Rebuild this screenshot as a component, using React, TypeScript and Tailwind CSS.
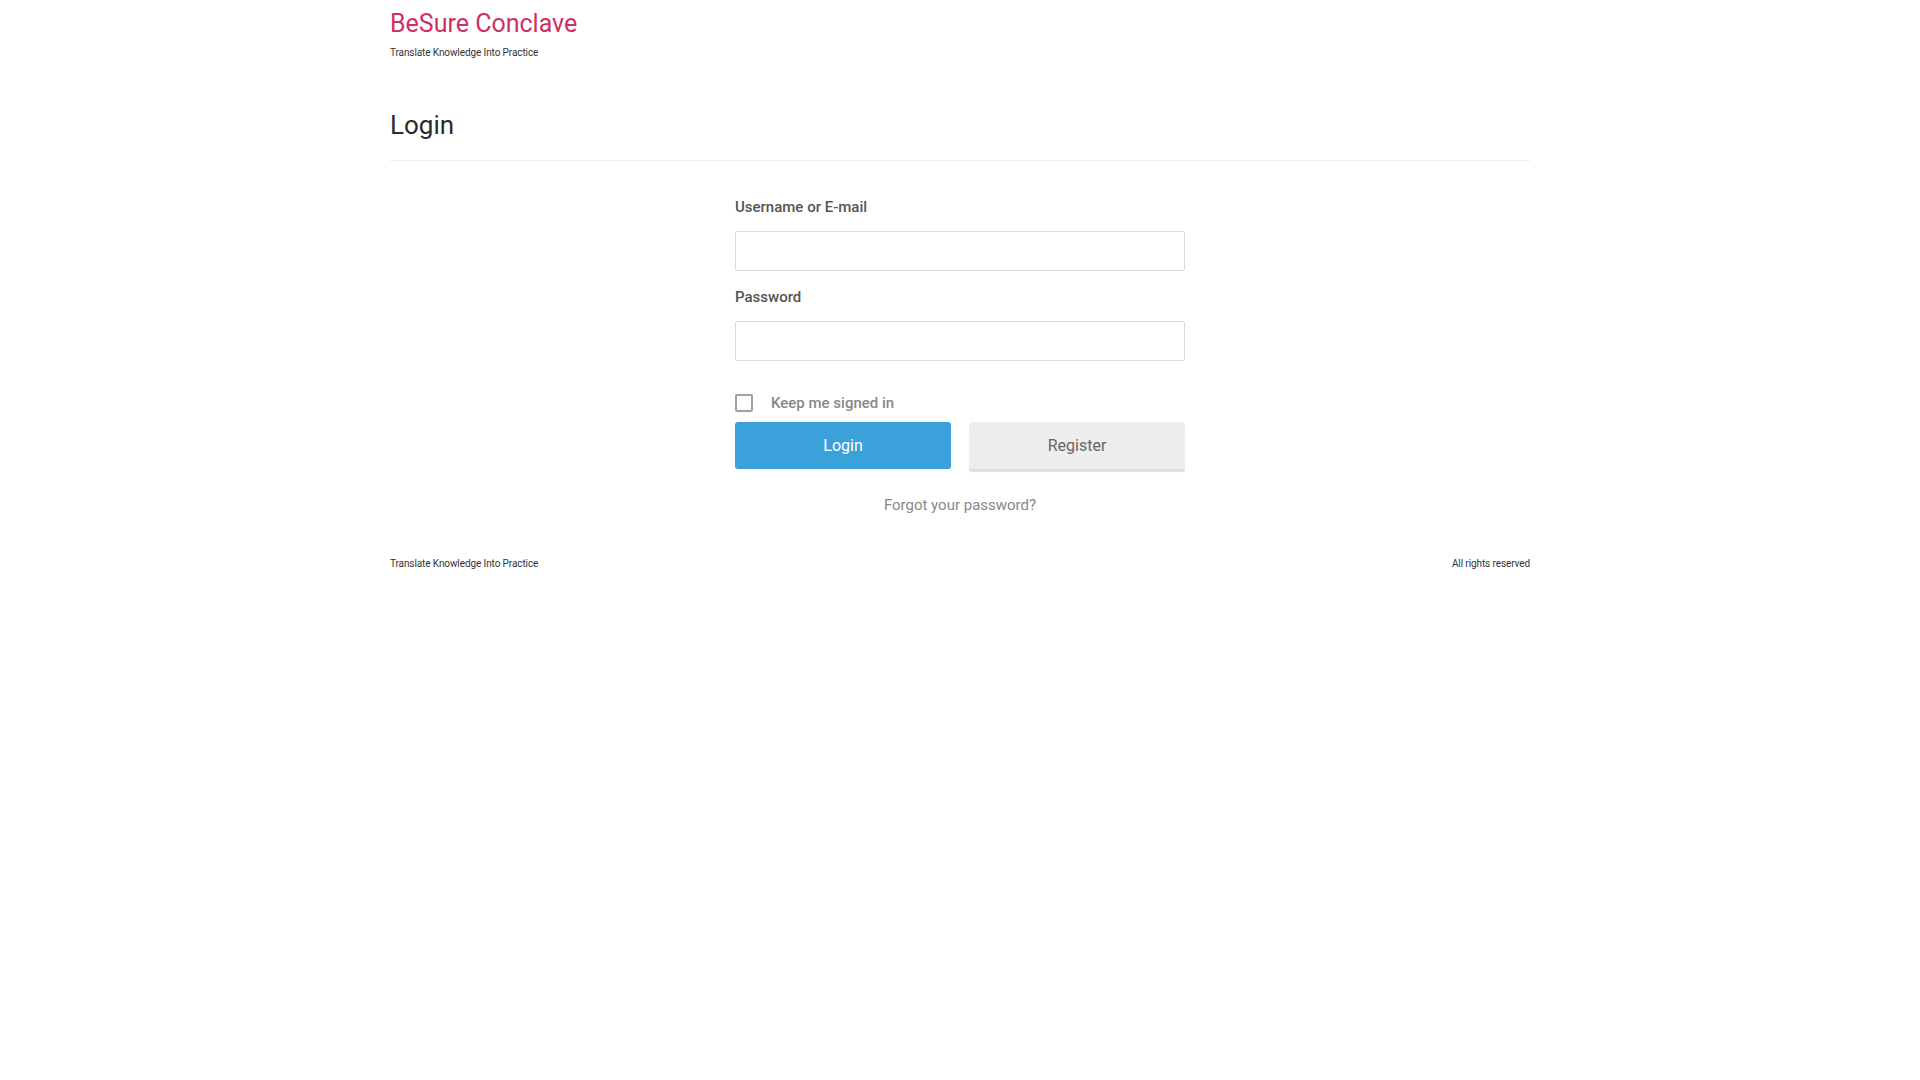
export default function App() {
  return (
    <div className="min-h-screen bg-white font-['Roboto',_'Liberation_Sans',_sans-serif] text-[#333]">
      <div className="mx-auto w-[1140px]">
        <header className="pt-[8px]">
          <h1 className="text-[25px] leading-[31px] text-[#cf2f64]">BeSure Conclave</h1>
          <p className="mt-[8px] text-[10px] leading-[12px] tracking-[-0.1px] text-[#333]">
            Translate Knowledge Into Practice
          </p>
        </header>

        <div className="mt-[50px] border-b border-[#eee] pb-[19px]">
          <h2 className="text-[26px] leading-[32px] text-[#2b2b2b]">Login</h2>
        </div>

        <form className="mx-auto w-[450px] pt-[36px]" onSubmit={(e) => e.preventDefault()}>
          <label className="block text-[15px] font-medium leading-[20px] text-[#555]">Username or E-mail</label>
          <input
            type="text"
            className="mt-[14px] block h-[40px] w-full rounded-[2px] border border-[#ddd] px-3 outline-none"
          />
          <label className="mt-[16px] block text-[15px] font-medium leading-[20px] text-[#555]">Password</label>
          <input
            type="password"
            className="mt-[14px] block h-[40px] w-full rounded-[2px] border border-[#ddd] px-3 outline-none"
          />

          <div className="mt-[33px] flex h-[18px] items-center gap-[18px]">
            <span className="block h-[18px] w-[18px] rounded-[2px] border-2 border-[#a0a0a0]" />
            <span className="text-[15px] font-medium leading-[18px] text-[#888]">Keep me signed in</span>
          </div>

          <div className="mt-[10px] flex gap-[18px]">
            <button
              type="submit"
              className="h-[47px] w-[216px] rounded-[3px] bg-[#3ba1db] text-[16px] text-white"
            >
              Login
            </button>
            <button
              type="button"
              className="h-[47px] w-[216px] rounded-[3px] bg-[#eee] text-[16px] text-[#666] shadow-[0_3px_1px_#dedde4]"
            >
              Register
            </button>
          </div>

          <p className="mt-[26px] text-center text-[15px] leading-[20px] text-[#888]">Forgot your password?</p>
        </form>

        <footer className="mt-[43px] flex justify-between text-[10px] leading-[12px] tracking-[-0.1px] text-[#333]">
          <span>Translate Knowledge Into Practice</span>
          <span>All rights reserved</span>
        </footer>
      </div>
    </div>
  )
}
